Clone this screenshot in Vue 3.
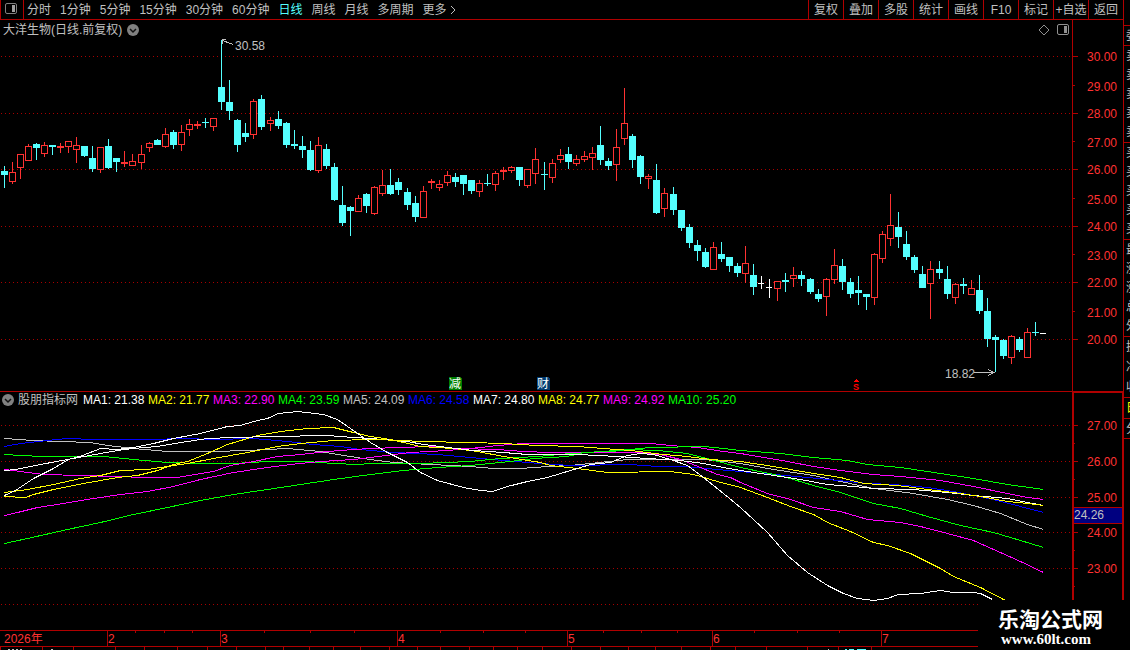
<script setup>
const periods = ['分时', '1分钟', '5分钟', '15分钟', '30分钟', '60分钟', '日线', '周线', '月线', '多周期', '更多']
const actions = ['复权', '叠加', '多股', '统计', '画线', 'F10', '标记', '+自选', '返回']

// centre x, high, body top, body bottom, low, kind (r = rising, c = falling, w = flat)
const candles = `4 166 171 175 188 c,12 162 172 182 184 r,20 154 154 168 179 r,28 144 146 161 161 r,36 143 144 148 160 c,44 142 145 154 157 r,52 145 145 147 155 c,60 143 146 148 153 r,68 141 141 147 153 r,76 137 145 150 163 r,84 146 146 156 157 c,92 146 158 169 172 c,100 147 147 170 173 r,108 139 146 168 169 c,116 158 158 162 172 c,124 151 162 164 167 r,132 154 161 166 166 r,141 145 154 163 169 r,149 142 143 148 152 r,157 139 140 145 145 c,165 128 134 147 148 r,173 130 132 145 149 c,181 125 132 145 151 r,189 119 124 130 136 r,197 121 124 126 129 r,205 118 122 123 128 c,213 118 118 127 131 r,221 40 87 102 110 c,229 80 102 111 120 c,237 119 120 145 152 c,245 123 133 137 142 c,253 99 101 135 139 r,261 95 99 127 130 c,270 117 120 124 131 r,278 111 119 126 129 c,286 122 123 145 148 c,294 130 144 146 149 c,302 136 146 150 158 c,310 141 150 170 171 c,318 137 145 171 173 r,326 144 149 166 169 c,334 163 167 200 201 c,342 186 205 223 226 c,350 206 207 211 236 c,358 195 198 212 212 r,366 193 194 206 213 c,374 186 187 214 215 r,382 170 185 194 196 r,390 169 185 194 195 c,398 178 182 190 195 c,407 188 192 205 210 c,415 196 203 217 222 c,423 186 191 218 218 r,431 179 181 183 189 r,439 180 184 188 191 r,447 171 175 183 186 r,455 173 177 182 187 c,463 175 175 184 195 c,471 180 180 191 194 c,479 180 183 192 197 r,487 174 183 184 186 c,495 171 173 185 191 r,503 167 170 172 180 r,511 166 167 171 173 r,519 167 167 180 186 c,527 169 169 186 188 r,535 148 159 174 184 r,544 162 174 175 190 c,552 159 163 178 183 r,560 149 155 160 163 r,568 147 154 162 169 c,576 155 159 164 166 r,584 151 156 160 162 r,592 147 153 158 170 r,600 126 145 160 165 c,608 158 161 166 170 c,616 129 147 165 181 r,624 88 123 139 145 r,632 134 136 160 168 c,640 155 156 177 184 c,648 174 176 179 189 r,656 164 180 213 214 c,664 188 193 209 217 r,673 187 194 210 215 c,681 210 210 228 231 c,689 224 227 243 248 c,697 240 245 251 261 c,705 248 252 267 268 c,713 242 247 270 270 r,721 242 254 259 262 c,729 257 257 266 272 c,737 263 266 273 277 c,745 246 263 274 283 r,753 264 275 287 295 c,761 276 283 284 289 w,769 279 287 288 298 w,777 281 281 289 301 r,785 273 280 282 292 c,793 267 275 279 287 r,801 271 275 279 286 c,810 278 279 292 294 c,818 289 294 299 302 c,826 278 279 297 316 r,834 249 265 280 284 r,842 259 266 282 290 c,850 278 282 294 298 c,858 276 290 293 305 c,866 294 294 297 310 c,874 253 254 298 305 r,882 231 234 259 263 r,890 194 225 239 246 r,898 212 227 237 248 c,906 231 244 257 260 c,914 255 257 270 273 c,922 266 274 288 288 c,930 261 269 284 319 r,939 261 269 273 279 c,947 266 279 294 299 c,955 283 284 298 304 r,963 278 284 286 294 c,971 280 288 295 295 r,979 275 290 311 314 c,987 298 311 339 347 c,995 335 337 340 372 c,1003 339 340 356 359 c,1011 335 336 358 364 r,1019 337 339 350 352 c,1027 328 332 358 358 r,1035 322 332 333 336 c,1043 333 333 334 334 w`
  .split(',')
  .map((row) => {
    const [x, high, top, bottom, low, kind] = row.split(' ')
    return { x: +x, high: +high, top: +top, bottom: +bottom, low: +low, kind }
  })

const averages = [
  { name: 'MA5', value: '24.09', tone: 'silver', points: '4,438 33,440 60,441 90,442 107,445 133,448 167,451 213,451 247,450 287,448 320,451 343,455 370,459 393,462 430,464 470,466 493,468 520,468 547,466 570,465 590,463 627,459 703,459 723,461 740,463 773,469 813,475 840,481 873,488 913,493 947,499 973,505 1000,513 1027,524 1043,529' },
  { name: 'MA6', value: '24.58', tone: 'blue', points: '4,446 20,443 47,440 67,438 93,439 133,439 150,439 183,438 213,439 253,438 287,441 313,444 340,446 360,449 393,452 437,454 470,457 503,460 540,463 570,465 630,464 657,466 683,466 717,469 740,471 807,477 837,480 867,483 893,484 927,487 953,491 993,499 1020,506 1043,512' },
  { name: 'MA4', value: '23.59', tone: 'green', points: '4,454 20,455 43,456 103,456 133,459 167,462 200,463 233,463 267,461 307,461 333,463 357,464 370,463 420,463 470,461 500,458 537,456 570,453 603,451 627,449 657,450 687,453 710,459 740,467 783,476 813,485 840,492 873,503 900,508 927,516 960,525 993,532 1020,540 1043,547' },
  { name: 'MA3', value: '22.90', tone: 'magenta', points: '4,469 20,471 43,474 80,475 113,476 147,477 177,477 200,473 213,471 230,465 253,461 277,456 300,454 327,451 353,449 370,448 400,447 430,446 457,448 497,449 523,451 550,452 597,452 637,452 660,454 680,459 700,467 717,474 730,477 740,482 767,493 790,499 813,507 840,511 867,519 900,522 920,526 947,533 973,540 993,549 1020,561 1043,572' },
  { name: 'MA9', value: '24.92', tone: 'magenta', points: '4,515 17,512 37,507 63,503 93,498 120,494 147,491 173,486 200,479 233,472 267,467 290,464 320,461 353,459 370,457 410,452 447,450 480,447 497,445 523,443 650,443 670,445 697,447 723,451 740,453 787,461 813,466 840,470 873,474 900,476 940,480 973,486 1007,493 1027,497 1043,499' },
  { name: 'MA10', value: '25.20', tone: 'green', points: '4,543 27,538 67,529 100,522 133,514 167,507 200,500 233,494 267,489 300,484 333,479 370,474 403,470 437,467 470,465 510,461 533,458 567,456 583,452 627,450 637,448 653,447 703,446 723,448 740,450 780,453 813,457 847,460 867,464 900,467 940,473 973,478 1007,484 1043,489' },
  { name: 'MA2', value: '21.77', tone: 'yellow', points: '4,496 25,497 33,494 53,489 83,483 117,477 137,475 157,470 173,464 187,461 207,453 227,444 257,435 280,431 307,428 333,427 353,432 370,436 390,439 403,442 420,446 453,448 477,451 503,456 540,462 550,465 577,468 607,472 670,471 693,474 717,481 740,487 767,497 790,506 813,514 827,522 850,531 873,542 887,545 910,553 940,568 953,576 980,587 1005,600' },
  { name: 'MA7', value: '24.80', tone: 'white', points: '4,470 15,469 40,464 67,459 78,457 100,453 117,450 133,448 157,446 180,442 207,438 233,437 273,436 327,435 353,437 370,438 407,441 423,444 447,447 473,450 503,452 527,454 577,454 617,456 647,458 680,460 703,463 723,467 740,470 767,474 800,479 827,484 853,486 873,488 913,489 947,492 973,495 1007,498 1027,502 1043,505' },
  { name: 'MA8', value: '24.77', tone: 'yellow', points: '4,492 27,489 53,484 80,478 100,475 120,470 147,469 167,466 187,463 213,458 247,452 277,446 300,443 333,440 370,439 403,440 420,441 470,442 503,443 537,445 577,446 603,448 630,450 663,454 687,456 710,459 740,461 773,466 807,472 840,477 863,483 897,485 927,489 953,492 980,496 1007,501 1027,503 1043,505' },
  { name: 'MA1', value: '21.38', tone: 'white', points: '4,495 15,490 33,478 53,468 68,459 82,455 100,448 117,449 133,447 153,443 173,438 200,433 227,426 240,425 253,421 267,418 278,413 297,411 323,414 337,419 350,428 370,442 387,452 407,462 420,472 437,480 463,487 480,490 492,491 507,486 527,481 547,477 570,470 590,464 610,462 627,455 640,453 653,454 670,459 687,465 703,477 723,493 740,507 767,532 787,555 807,572 827,585 843,593 857,598 873,600 887,598 898,594 920,593 940,590 953,592 973,592 980,593 992,599' },
]
const legend = [...averages].sort((a, b) => a.name.slice(2) - b.name.slice(2))

const priceLabels = [
  ['30.00', 61], ['29.00', 91], ['28.00', 118], ['27.00', 147], ['26.00', 174], ['25.00', 204],
  ['24.00', 231], ['23.00', 260], ['22.00', 287], ['21.00', 317], ['20.00', 344],
]
const priceMajor = [56, 113, 169, 226, 282, 339]
const priceMinor = [85, 141, 198, 254, 311]
const maLabels = [['27.00', 430], ['26.00', 466], ['25.00', 502], ['24.00', 537], ['23.00', 573]]
const maMajor = [425, 461, 497, 532, 568, 604]
const maMinor = [443, 479, 514, 550, 586]

const months = [[0, '2026年'], [107, '2'], [220, '3'], [397, '4'], [567, '5'], [712, '6'], [881, '7']]
const weekTicks = [135, 164, 192, 264, 310, 354, 440, 483, 525, 603, 641, 677, 754, 797, 839]
const lowerTicks = [0, 42, 73, 115, 144, 177, 207, 236, 265, 283, 309, 333, 360, 389, 417, 440, 469, 493, 517, 542, 571, 600, 628, 655, 681, 710, 735, 766, 807, 838, 871]

const quotes = [
  { kind: 'one', rows: ['委'] },
  { kind: 'five', rows: ['卖', '卖', '卖', '卖', '卖'] },
  { kind: 'five', rows: ['买', '买', '买', '买', '买'] },
  { kind: 'five', rows: ['最', '涨', '涨', '总', '外'] },
  { kind: 'three', rows: ['换', '净', '收'] },
  { kind: 'one mark', rows: ['日'] },
  { kind: 'one', rows: ['分'] },
  { kind: 'rest', rows: [] },
]
</script>

<template>
  <div class="terminal">
    <div class="workspace">
      <header class="toolbar">
        <button class="panel-toggle" aria-label="侧栏">
          <svg width="12" height="11" viewBox="0 0 12 11">
            <rect x="0.5" y="0.5" width="11" height="10" rx="1.5" fill="none" stroke="#808080" />
            <rect x="7" y="2" width="3" height="7" fill="#a0a0a0" />
          </svg>
        </button>
        <nav class="periods">
          <button v-for="p in periods" :key="p" :class="{ active: p === '日线' }">{{ p }}</button>
          <svg class="more" width="6" height="10" viewBox="0 0 6 10"><path d="M1 1L5 5L1 9" fill="none" stroke="#c0c0c0" /></svg>
        </nav>
        <nav class="actions">
          <button v-for="a in actions" :key="a">{{ a }}</button>
        </nav>
      </header>

      <section class="pane">
        <svg class="plot" viewBox="0 20 1072 371" preserveAspectRatio="none">
          <g class="grid"><line v-for="y in priceMajor" :key="y" x1="1" x2="1071" :y1="y + 0.5" :y2="y + 0.5" /></g>
          <g v-for="c in candles" :key="c.x" :class="['candle', c.kind]">
            <rect :x="c.x" :y="c.high" width="1" :height="c.top - c.high" />
            <rect :x="c.x" :y="c.bottom" width="1" :height="c.low - c.bottom" />
            <rect v-if="c.kind === 'w'" :x="c.x" :y="c.top" width="1" height="1" />
            <rect
              v-if="c.kind === 'r' && c.bottom - c.top > 2"
              class="hollow" :x="c.x - 2.5" :y="c.top + 0.5" width="6" :height="c.bottom - c.top - 1"
            />
            <rect v-else :x="c.x - 3" :y="c.top" :width="c.kind === 'w' ? 6 : 7" :height="c.bottom - c.top" />
          </g>
          <g class="note">
            <path d="M222.5 40.5L233 44.5M222 39.5H226M222.5 40V44" />
            <text x="235" y="50">30.58</text>
            <path d="M974 372.5H994M988 369.5L994 372.5L988 375.5" />
            <text x="945" y="378">18.82</text>
          </g>
          <path class="badge-green" d="M449 377H460L462 379V390H449Z" />
          <text class="badge" x="449" y="388">减</text>
          <path class="badge-navy" d="M537 377H548L550 379V390H537Z" />
          <text class="badge" x="537" y="388">财</text>
          <path class="sell" d="M854 382L856 379H857L859 382Z" />
          <text class="sell" x="853" y="390">S</text>
        </svg>
        <div class="caption">
          <span>大洋生物(日线.前复权)</span>
          <button class="disc" aria-label="展开">
            <svg width="12" height="12" viewBox="0 0 12 12">
              <circle cx="6" cy="6" r="6" fill="#808080" />
              <path d="M3 5L6 8L9 5" fill="none" stroke="#101010" stroke-width="1.5" />
            </svg>
          </button>
          <svg class="corner" width="31" height="12" viewBox="0 0 31 12">
            <path d="M6 1L11 6L6 11L1 6Z" fill="none" stroke="#909090" />
            <rect x="19.5" y="0.5" width="11" height="10" rx="1.5" fill="none" stroke="#909090" />
            <rect x="26" y="2" width="3" height="7" fill="#909090" />
          </svg>
        </div>
        <svg class="scale" viewBox="0 20 50 371" preserveAspectRatio="none">
          <path v-for="y in priceMajor" :key="y" :d="`M0 ${y + 0.5}H5`" />
          <path v-for="y in priceMinor" :key="y" :d="`M0 ${y + 0.5}H2`" />
          <text v-for="[label, y] in priceLabels" :key="label" x="14" :y="y">{{ label }}</text>
        </svg>
      </section>

      <section class="pane lower">
        <svg class="plot" viewBox="0 392 1072 238" preserveAspectRatio="none">
          <g class="grid"><line v-for="y in maMajor" :key="y" x1="1" x2="1071" :y1="y + 0.5" :y2="y + 0.5" /></g>
          <polyline v-for="m in averages" :key="m.name" :class="['average', m.tone]" :points="m.points" />
        </svg>
        <div class="caption">
          <button class="disc" aria-label="展开">
            <svg width="12" height="12" viewBox="0 0 12 12">
              <circle cx="6" cy="6" r="6" fill="#808080" />
              <path d="M3 5L6 8L9 5" fill="none" stroke="#101010" stroke-width="1.5" />
            </svg>
          </button>
          <span class="source">股朋指标网</span>
          <span v-for="m in legend" :key="m.name" :class="['reading', m.tone]">{{ m.name }}: {{ m.value }}</span>
        </div>
        <svg class="scale" viewBox="0 393 48 237" preserveAspectRatio="none">
          <path v-for="y in maMajor" :key="y" :d="`M0 ${y + 0.5}H4`" />
          <path v-for="y in maMinor" :key="y" :d="`M0 ${y + 0.5}H1`" />
          <text v-for="[label, y] in maLabels" :key="label" x="13" :y="y">{{ label }}</text>
          <rect class="cursor" x="0" y="508" width="48" height="15" />
          <path d="M0 507.5H48M0 523.5H48" />
          <text class="cursor-value" x="0" y="519">24.26</text>
        </svg>
      </section>

      <svg class="dates" viewBox="0 630 1123 17" preserveAspectRatio="none">
        <path d="M0 630.5H1123M0 646.5H1123" />
        <path v-for="x in weekTicks" :key="x" :d="`M${x + 0.5} 631V633`" />
        <g v-for="[x, label] in months" :key="label">
          <path v-if="x" :d="`M${x + 0.5} 631V646`" />
          <text :x="x ? x + 1 : 4" y="643">{{ label }}</text>
        </g>
      </svg>
      <svg class="dates" viewBox="0 647 1123 3" preserveAspectRatio="none">
        <path v-for="x in lowerTicks" :key="x" :d="`M${x + 0.5} 647V650`" />
        <path class="silver" d="M8 649.5H10M12 649.5H14M16 649.5H18M20 649.5H22M51 649.5H53M828 649.5H829" />
        <path class="cyan" d="M845 649.5H847M849 649.5H854M857 649.5H866" />
      </svg>
    </div>

    <aside class="quotes">
      <div v-for="(q, i) in quotes" :key="i" :class="['group', q.kind]">
        <span v-for="(r, j) in q.rows" :key="j">{{ r }}</span>
      </div>
    </aside>

    <div class="watermark">
      <strong>乐淘公式网</strong>
      <a href="#">www.60lt.com</a>
    </div>
  </div>
</template>

<style>
body {
  background: #000;
}
</style>

<style scoped>
.terminal {
  position: relative;
  display: flex;
  height: 100vh;
  overflow: hidden;
  background: #000;
  color: #c0c0c0;
  font: 12px/14px "Liberation Sans", "Noto Sans CJK SC", sans-serif;
}
.workspace {
  flex: 1;
  min-width: 0;
  display: grid;
  grid-template-rows: 20px minmax(0, 372fr) minmax(0, 238fr) 17px 3px;
}
button {
  margin: 0;
  padding: 0;
  border: 0;
  background: none;
  color: inherit;
  font: inherit;
  white-space: nowrap;
}
.toolbar {
  display: flex;
  border-bottom: 1px solid #b00000;
  box-sizing: border-box;
  min-width: 0;
}
.panel-toggle {
  width: 24px;
  box-sizing: border-box;
  flex: none;
  display: flex;
  align-items: center;
  justify-content: center;
  padding-right: 2px;
  padding-bottom: 2px;
  border-left: 1px solid #b00000;
  border-right: 1px solid #b00000;
}
.periods {
  flex: 1;
  min-width: 0;
  display: flex;
  align-items: center;
  gap: 9px;
  padding-left: 3px;
  overflow: hidden;
}
.periods .active {
  color: #54ffff;
}
.periods .more {
  margin-left: -6px;
}
.actions {
  display: grid;
  grid-template-columns: repeat(9, 35px);
}
.actions button {
  border-left: 1px solid #b00000;
}
.pane {
  position: relative;
  display: grid;
  grid-template-columns: minmax(0, 1fr) 51px;
  border-bottom: 1px solid #b00000;
}
.pane.lower {
  border-bottom: 0;
}
.plot,
.scale,
.dates {
  display: block;
  width: 100%;
  height: 100%;
  min-height: 0;
  overflow: hidden;
  box-sizing: border-box;
}
.scale {
  border-left: 1px solid #b00000;
}
.lower .scale {
  border-left-width: 2px;
  border-top: 1px solid #b00000;
  border-right: 1px solid #b00000;
}
.plot *,
.scale path,
.dates path {
  shape-rendering: crispEdges;
}
.scale path,
.dates path {
  stroke: #b00000;
}
.scale text,
.dates text {
  fill: #ff3232;
}
.grid line {
  stroke: #a80000;
  stroke-dasharray: 1 3;
}
.candle {
  fill: #54ffff;
}
.candle.r {
  fill: #ff3232;
}
.candle.w {
  fill: #fff;
}
.candle .hollow {
  fill: #000;
  stroke: #ff3232;
}
.note path {
  fill: none;
  stroke: #c0c0c0;
}
.note text {
  fill: #c0c0c0;
}
.badge {
  fill: #fff;
}
.badge-green {
  fill: #008000;
}
.badge-navy {
  fill: #003a70;
}
.sell {
  fill: #f00;
  font: bold 9px "Liberation Sans", sans-serif;
}
.caption {
  position: absolute;
  top: 0;
  left: 0;
  right: 51px;
  height: 19px;
  display: flex;
  align-items: center;
  padding-left: 3px;
  white-space: nowrap;
}
.lower .caption {
  height: 16px;
  padding-left: 2px;
}
.disc {
  display: flex;
  margin-left: 5px;
}
.lower .disc {
  margin-left: 0;
}
.corner {
  margin-left: auto;
  margin-right: 3px;
}
.source {
  margin: 0 5px 0 4px;
}
.reading {
  width: 65px;
}
.average {
  fill: none;
  stroke: currentColor;
  transform: translate(0.5px, 0.5px);
}
.white {
  color: #fff;
}
.yellow {
  color: #ff0;
}
.magenta {
  color: #f0f;
}
.green {
  color: #0f0;
}
.silver {
  color: #c0c0c0;
}
.blue {
  color: #00f;
}
.dates .silver {
  stroke: #c0c0c0;
}
.dates .cyan {
  stroke: #54ffff;
}
.scale .cursor {
  fill: #000080;
}
.scale .cursor-value {
  fill: #c0c0c0;
}
.quotes {
  width: 6px;
  flex: none;
  padding-top: 25px;
  border-left: 1px solid #b00000;
  overflow: hidden;
}
.group {
  display: flex;
  flex-direction: column;
  height: 20px;
  box-sizing: border-box;
  border-top: 1px solid #b00000;
  padding-left: 2px;
}
.group span {
  flex: 1;
  display: flex;
  align-items: center;
}
.group.five {
  height: 97px;
}
.group.three {
  height: 61px;
}
.group.mark {
  height: 21px;
  color: #ff0;
}
.watermark {
  position: absolute;
  right: 0;
  bottom: 0;
  width: 152px;
  height: 50px;
  box-sizing: border-box;
  padding: 7px 0 0 20px;
  background: #000;
  color: #fff;
}
.watermark strong,
.watermark a {
  display: block;
  color: #fff;
  text-decoration: none;
  white-space: nowrap;
}
.watermark strong {
  font: bold 21px/22px "Noto Sans CJK SC", sans-serif;
}
.watermark a {
  padding-left: 3px;
  font: bold 15px/20px "Liberation Serif", serif;
}
</style>
